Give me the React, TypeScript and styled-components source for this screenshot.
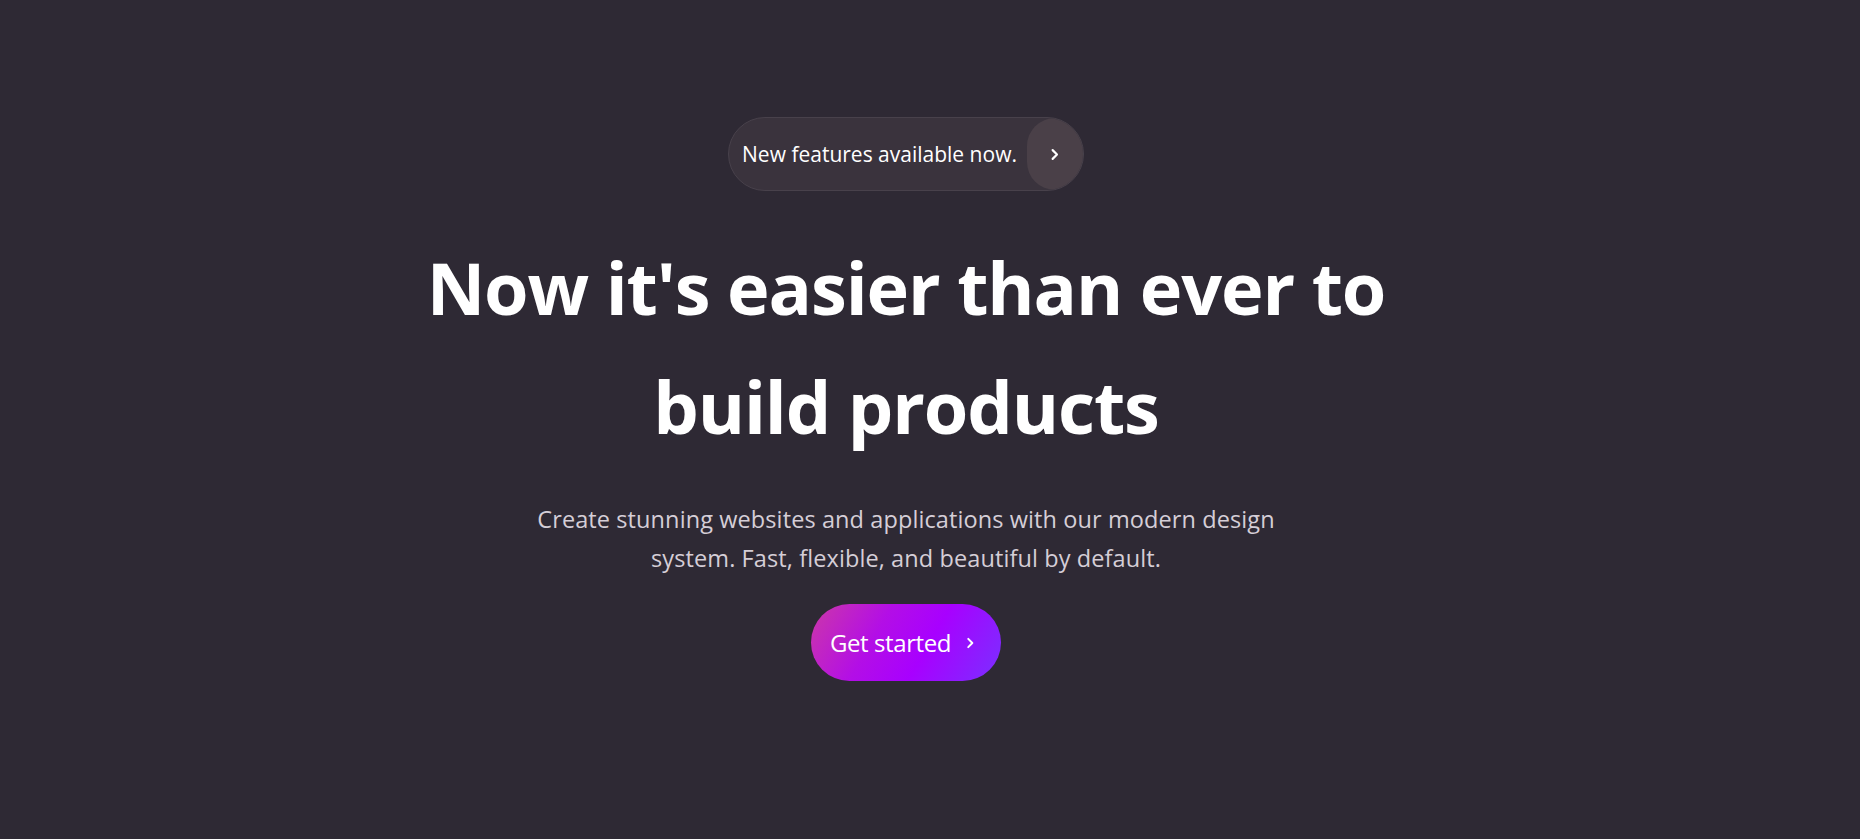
import React from "react";
import styled, { createGlobalStyle } from "styled-components";

const Global = createGlobalStyle`
  html, body { margin: 0; padding: 0; background: #2e2934; }
  body { font-family: "Open Sans", "Noto Sans", sans-serif; -webkit-font-smoothing: antialiased; }
`;

const Page = styled.main`
  min-height: 100vh;
  box-sizing: border-box;
  background: #2e2934;
  display: flex;
  flex-direction: column;
  align-items: center;
  padding: 117px 48px 0 0;
  text-align: center;
`;

const Announce = styled.a`
  display: inline-flex;
  align-items: center;
  height: 74px;
  box-sizing: border-box;
  border: 1.5px solid #48414b;
  background: #3a333d;
  border-radius: 999px;
  padding-left: 13px;
  gap: 10px;
  color: #ffffff;
  text-decoration: none;
  font-size: 21px;
  letter-spacing: 0;
  overflow: hidden;
`;

const AnnounceIcon = styled.span`
  width: 56px;
  align-self: stretch;
  border-radius: 999px;
  background: #4a4048;
  display: flex;
  align-items: center;
  justify-content: center;
`;

const Title = styled.h1`
  margin: 37px 0 0;
  max-width: 1040px;
  font-size: 72px;
  line-height: 119px;
  font-weight: 700;
  color: #ffffff;
  letter-spacing: -1.1px;
`;

const Lead = styled.p`
  margin: 34px 0 0;
  max-width: 770px;
  font-size: 23.5px;
  line-height: 39px;
  color: #d5ced7;
  letter-spacing: 0.1px;
`;

const Cta = styled.button`
  margin-top: 26px;
  height: 77px;
  padding: 0 24px 0 19px;
  border: none;
  border-radius: 999px;
  display: inline-flex;
  align-items: center;
  gap: 12px;
  font-family: inherit;
  font-size: 24px;
  letter-spacing: -0.4px;
  color: #ffffff;
  cursor: pointer;
  background: linear-gradient(120deg, #cc38a8 0%, #b30ee6 35%, #a800ff 60%, #7a30ff 100%);
`;

const Chevron = ({ size = 14 }: { size?: number }) => (
  <svg width={size} height={size} viewBox="0 0 24 24" fill="none" stroke="#fff" strokeWidth={3.4} strokeLinecap="round" strokeLinejoin="round">
    <path d="M9 5l7 7-7 7" />
  </svg>
);

export default function App() {
  return (
    <>
      <Global />
      <Page>
        <Announce href="#">
          <span>New features available now.</span>
          <AnnounceIcon>
            <Chevron size={15} />
          </AnnounceIcon>
        </Announce>
        <Title>
          Now it's easier than ever to
          <br />
          build products
        </Title>
        <Lead>
          Create stunning websites and applications with our modern design system. Fast, flexible, and beautiful by default.
        </Lead>
        <Cta>
          Get started
          <Chevron size={14} />
        </Cta>
      </Page>
    </>
  );
}
